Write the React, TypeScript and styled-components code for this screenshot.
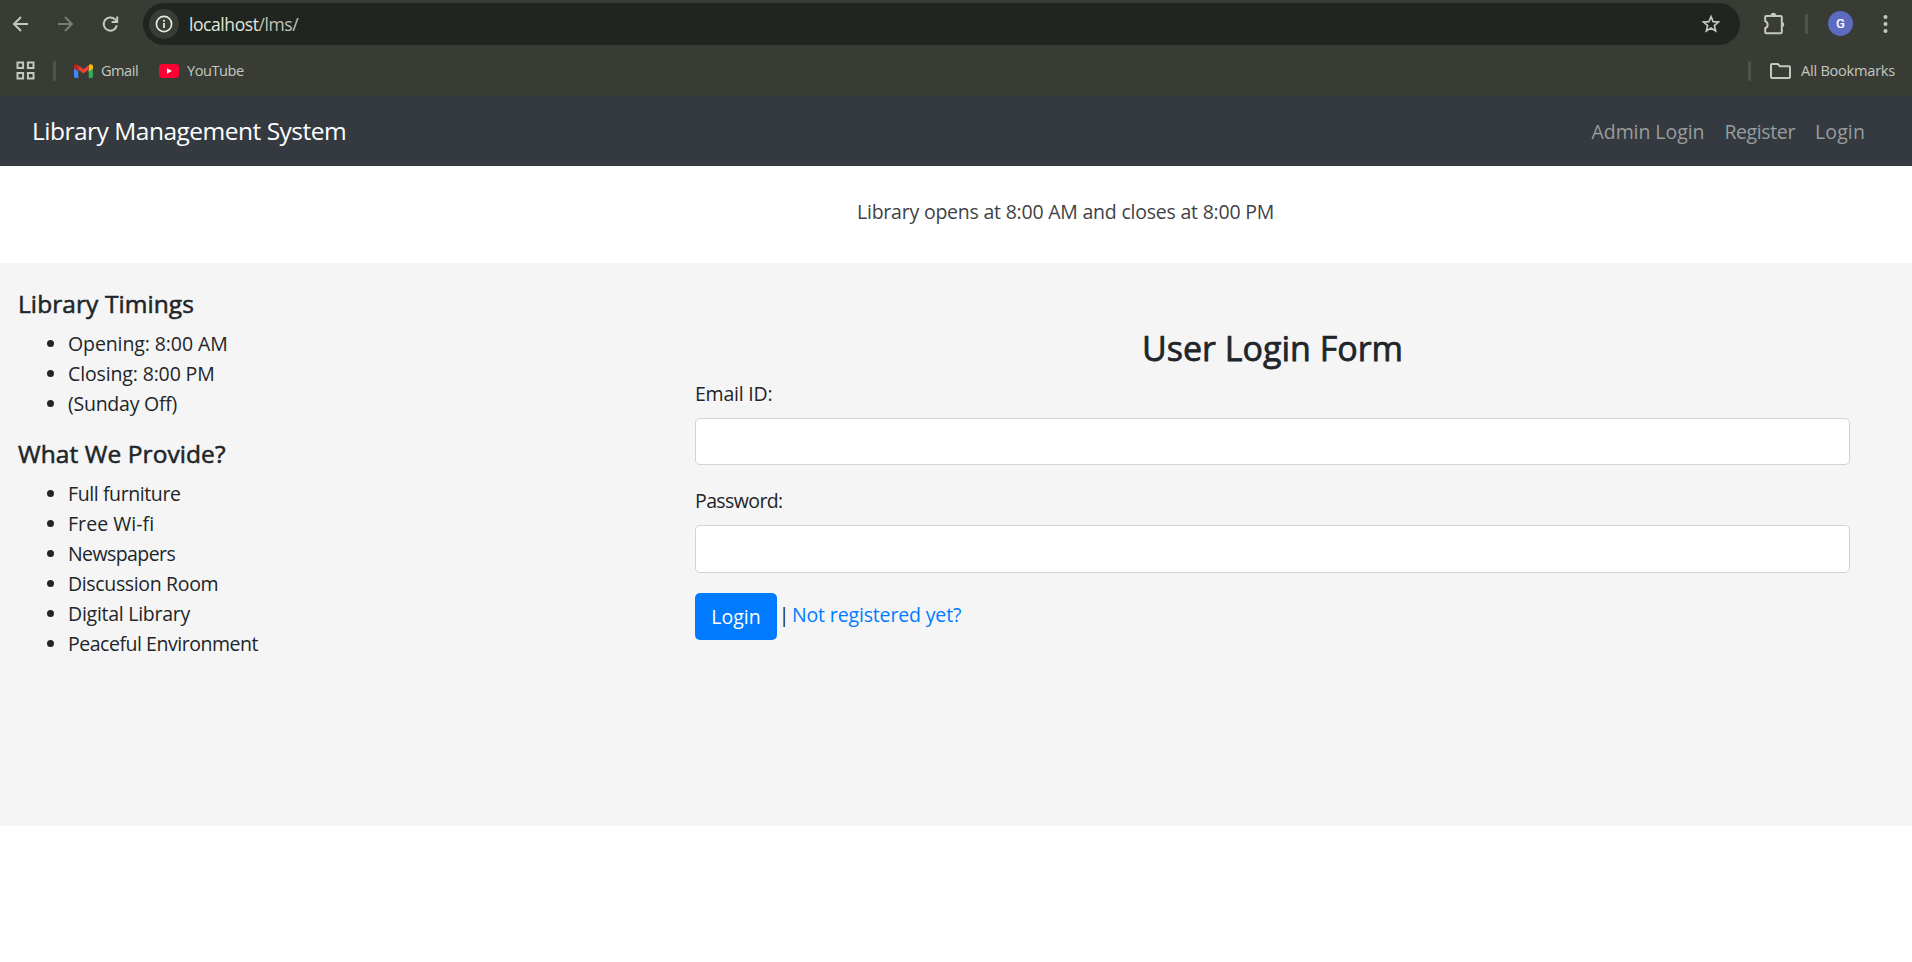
import React from 'react';
import styled, { createGlobalStyle } from 'styled-components';

const GlobalStyle = createGlobalStyle`
  *, *::before, *::after { box-sizing: border-box; }
  body {
    margin: 0;
    background: #fff;
    color: #212529;
    font-family: "Segoe UI", "Open Sans", "Noto Sans", sans-serif;
    font-size: 19.5px;
    line-height: 30px;
    overflow: hidden;
  }
`;

const Text = styled.span<{ $track?: number }>`
  letter-spacing: ${(p) => p.$track ?? 0}px;
  white-space: nowrap;
`;

/* Browser frame */
const Browser = styled.header`
  height: 96px;
  background: #383c35;
  color: #c5c8bf;
`;

const Toolbar = styled.div`
  display: flex;
  align-items: center;
  height: 47px;
  padding: 0 15px 0 11px;
`;

const Icon = styled.svg<{ $w: number; $h?: number; $gap?: number }>`
  display: block;
  flex: none;
  width: ${(p) => p.$w}px;
  height: ${(p) => p.$h ?? p.$w}px;
  margin-left: ${(p) => p.$gap ?? 0}px;
`;

const AddressBar = styled.div`
  display: flex;
  align-items: center;
  flex: none;
  width: 1597px;
  height: 42px;
  margin: 1px 0 0 23px;
  padding: 0 19px 0 6px;
  border-radius: 21px;
  background: #21251f;
`;

const SiteInfo = styled.div`
  display: grid;
  place-items: center;
  width: 30px;
  height: 30px;
  border-radius: 50%;
  background: #383c35;
  color: #e2e4de;
`;

const Url = styled.div`
  flex: 1;
  margin-left: 10px;
  color: #e4e6df;
  font-size: 17.5px;
  letter-spacing: -0.42px;
  line-height: 24px;
  padding-bottom: 1px;
`;

const UrlPath = styled.span`
  color: #c0c3bb;
`;

const Separator = styled.span<{ $gap: number }>`
  flex: none;
  width: 3px;
  height: 20px;
  margin-left: ${(p) => p.$gap}px;
  border-radius: 1.5px;
  background: #50544c;
`;

const Avatar = styled.div`
  display: grid;
  place-items: center;
  flex: none;
  width: 25px;
  height: 25px;
  margin-left: 20px;
  border-radius: 50%;
  background: #5c6bc0;
  color: #fff;
  font: 500 13px/25px Roboto, sans-serif;
`;

const BookmarkBar = styled.div`
  display: flex;
  align-items: center;
  height: 47px;
  padding: 0 17px 0 16px;
  font-size: 14.6px;
  line-height: 20px;
`;

const BookmarkLabel = styled(Text)<{ $gap: number }>`
  margin-left: ${(p) => p.$gap}px;
  padding-bottom: 2px;
`;

const Spacer = styled.div`
  flex: 1;
`;

/* Page */
const Navbar = styled.nav`
  display: flex;
  align-items: center;
  justify-content: space-between;
  height: 70px;
  padding: 0 47px 0 32px;
  background: #343a40;
`;

const Brand = styled.a`
  color: #fff;
  font-size: 24.5px;
  letter-spacing: -0.5px;
  line-height: 38px;
`;

const NavLinks = styled.div`
  display: flex;
  gap: 20px;
  padding-top: 1px;
`;

const NavLink = styled(Text)`
  color: #999c9f;
`;

const Notice = styled.div`
  height: 97px;
  padding: 31px 0 0 857px;
  color: #3e4246;
`;

const Content = styled.main`
  display: flex;
  height: 563px;
  background: #f5f5f5;
`;

const Sidebar = styled.aside`
  width: 695px;
  padding: 26px 0 0 18px;
`;

const SideTitle = styled.h5`
  margin: 0 0 10px;
  font-size: 24.5px;
  font-weight: 400;
  letter-spacing: 0.08px;
  line-height: 30px;
  -webkit-text-stroke: 0.55px currentColor;
`;

const List = styled.ul`
  margin: 0 0 20px;
  padding-left: 50px;
`;

const Login = styled.section`
  width: 1155px;
  padding-top: 64px;
`;

const FormTitle = styled.h3`
  margin: 0 0 10px;
  font-size: 34px;
  font-weight: 400;
  letter-spacing: 0;
  line-height: 42px;
  text-align: center;
  -webkit-text-stroke: 0.75px currentColor;
`;

const Field = styled.label`
  display: block;
  margin-bottom: 21px;

  & + & {
    margin-bottom: 20px;
  }
`;

const Input = styled.input<{ $h: number }>`
  display: block;
  width: 100%;
  height: ${(p) => p.$h}px;
  margin-top: 9px;
  border: 1px solid #ced4da;
  border-radius: 5px;
  background: #fff;
`;

const Actions = styled.div`
  display: flex;
  align-items: center;
`;

const Button = styled.button`
  width: 82px;
  height: 47px;
  padding: 0;
  border: 0;
  border-radius: 5px;
  background: #007bff;
  color: #fff;
  font: inherit;
`;

const Divider = styled.span`
  margin: -4px 0 0;
  width: 14px;
  text-align: center;
`;

const RegisterLink = styled(Text)`
  margin: -4px 0 0 1px;
  color: #007bff;
`;

const timings: [string, number][] = [
  ['Opening: 8:00 AM', -0.1],
  ['Closing: 8:00 PM', -0.14],
  ['(Sunday Off)', -0.25],
];

const services: [string, number][] = [
  ['Full furniture', -0.4],
  ['Free Wi-fi', 0.05],
  ['Newspapers', -0.58],
  ['Discussion Room', -0.35],
  ['Digital Library', -0.26],
  ['Peaceful Environment', -0.47],
];

const Items = ({ items }: { items: [string, number][] }) => (
  <List>
    {items.map(([label, track]) => (
      <li key={label}>
        <Text $track={track}>{label}</Text>
      </li>
    ))}
  </List>
);

const stroke = { fill: 'none', stroke: 'currentColor', strokeWidth: 2 };

export default function App() {
  return (
    <>
      <GlobalStyle />
      <Browser>
        <Toolbar>
          <Icon $w={20} viewBox="0 0 20 20" {...stroke}>
            <path d="M17 10H3.5M10 3L3 10l7 7" />
          </Icon>
          <Icon $w={20} $gap={25} viewBox="0 0 20 20" {...stroke} opacity={0.45}>
            <path d="M2 10h13.5M9 3l7 7-7 7" />
          </Icon>
          <Icon $w={20} $gap={24} viewBox="0 0 20 20" {...stroke}>
            <path d="M16.8 11.2A6.6 6.6 0 1 1 15 5.4L17 7.4" />
            <path d="M17.2 2.5V8h-5.6" />
          </Icon>
          <AddressBar>
            <SiteInfo>
              <Icon $w={18} viewBox="0 0 18 18" {...stroke}>
                <circle cx="9" cy="9" r="7.6" strokeWidth="1.7" />
                <path d="M9 8v5M9 4.7v2" strokeWidth="1.8" />
              </Icon>
            </SiteInfo>
            <Url>
              localhost<UrlPath>/lms/</UrlPath>
            </Url>
            <Icon $w={20} viewBox="0 0 20 20" {...stroke} strokeWidth={1.7}>
              <path d="M10 2.6l2.1 5 5.4.45-4.1 3.55 1.25 5.3L10 14.1l-4.65 2.8 1.25-5.3L2.5 8.05l5.4-.45z" />
            </Icon>
          </AddressBar>
          <Icon $w={24} $gap={23} viewBox="0 0 24 24" fill="none" stroke="currentColor" strokeWidth="2">
            <path d="M3.2 4h14.6q1 0 1 1v15.3q0 1-1 1H3.2q-1 0-1-1v-4.1a3.8 3.8 0 0 0 0-7.1V5q0-1 1-1z" />
            <path d="M7.6 3.6a2.8 2.8 0 0 1 5.6 0zM19.2 9.8a2.8 2.8 0 0 1 0 5.4z" fill="currentColor" stroke="none" />
          </Icon>
          <Separator $gap={18} />
          <Avatar>G</Avatar>
          <Icon $w={20} $gap={22} viewBox="0 0 20 20" fill="currentColor">
            <circle cx="10.5" cy="3" r="2" />
            <circle cx="10.5" cy="10" r="2" />
            <circle cx="10.5" cy="17" r="2" />
          </Icon>
        </Toolbar>
        <BookmarkBar>
          <Icon $w={19} viewBox="0 0 19 19" {...stroke}>
            <path d="M1.5 1.5h5.6v5.6H1.5zM11.9 1.5h5.6v5.6h-5.6zM1.5 11.9h5.6v5.6H1.5zM11.9 11.9h5.6v5.6h-5.6z" />
          </Icon>
          <Separator $gap={18} />
          <Icon $w={19} $h={14} $gap={18} viewBox="0 0 19 14">
            <path d="M0 3v9.6Q0 14 1.4 14h2.9V5.2z" fill="#4285f4" />
            <path d="M19 3v9.6q0 1.4-1.4 1.4h-2.9V5.2z" fill="#34a853" />
            <path d="M14.7 1.2Q16 0 17.3.2 19 .6 19 2.4v2L14.7 7.8z" fill="#fbbc04" />
            <path d="M4.3 1.2L9.5 5.2l5.2-4v4.4l-5.2 4-5.2-4z" fill="#ea4335" />
            <path d="M4.3 1.2Q3 0 1.7.2 0 .6 0 2.4v2l4.3 3.4z" fill="#c5221f" />
          </Icon>
          <BookmarkLabel $gap={8} $track={-0.5}>Gmail</BookmarkLabel>
          <Icon $w={20} $h={14} $gap={21} viewBox="0 0 20 14">
            <rect width="20" height="14" rx="3.4" fill="#ff0033" />
            <path d="M8 4.2v5.6L13 7z" fill="#fff" />
          </Icon>
          <BookmarkLabel $gap={8} $track={-0.48}>YouTube</BookmarkLabel>
          <Spacer />
          <Separator $gap={0} />
          <Icon $w={21} $h={16} $gap={19} viewBox="0 0 21 16" {...stroke}>
            <path d="M2 1h5.8l2.2 2.2h9q1 0 1 1V14q0 1-1 1H2q-1 0-1-1V2q0-1 1-1z" />
          </Icon>
          <BookmarkLabel $gap={10} $track={-0.25}>All Bookmarks</BookmarkLabel>
        </BookmarkBar>
      </Browser>

      <Navbar>
        <Brand>Library Management System</Brand>
        <NavLinks>
          <NavLink $track={-0.07}>Admin Login</NavLink>
          <NavLink $track={-0.38}>Register</NavLink>
          <NavLink $track={0.12}>Login</NavLink>
        </NavLinks>
      </Navbar>

      <Notice>
        <Text $track={-0.22}>Library opens at 8:00 AM and closes at 8:00 PM</Text>
      </Notice>

      <Content>
        <Sidebar>
          <SideTitle>Library Timings</SideTitle>
          <Items items={timings} />
          <SideTitle>What We Provide?</SideTitle>
          <Items items={services} />
        </Sidebar>
        <Login>
          <FormTitle>User Login Form</FormTitle>
          <Field>
            <Text $track={-0.22}>Email ID:</Text>
            <Input type="text" $h={47} />
          </Field>
          <Field>
            <Text $track={-0.6}>Password:</Text>
            <Input type="password" $h={48} />
          </Field>
          <Actions>
            <Button>Login</Button>
            <Divider>|</Divider>
            <RegisterLink $track={-0.15}>Not registered yet?</RegisterLink>
          </Actions>
        </Login>
      </Content>
    </>
  );
}
